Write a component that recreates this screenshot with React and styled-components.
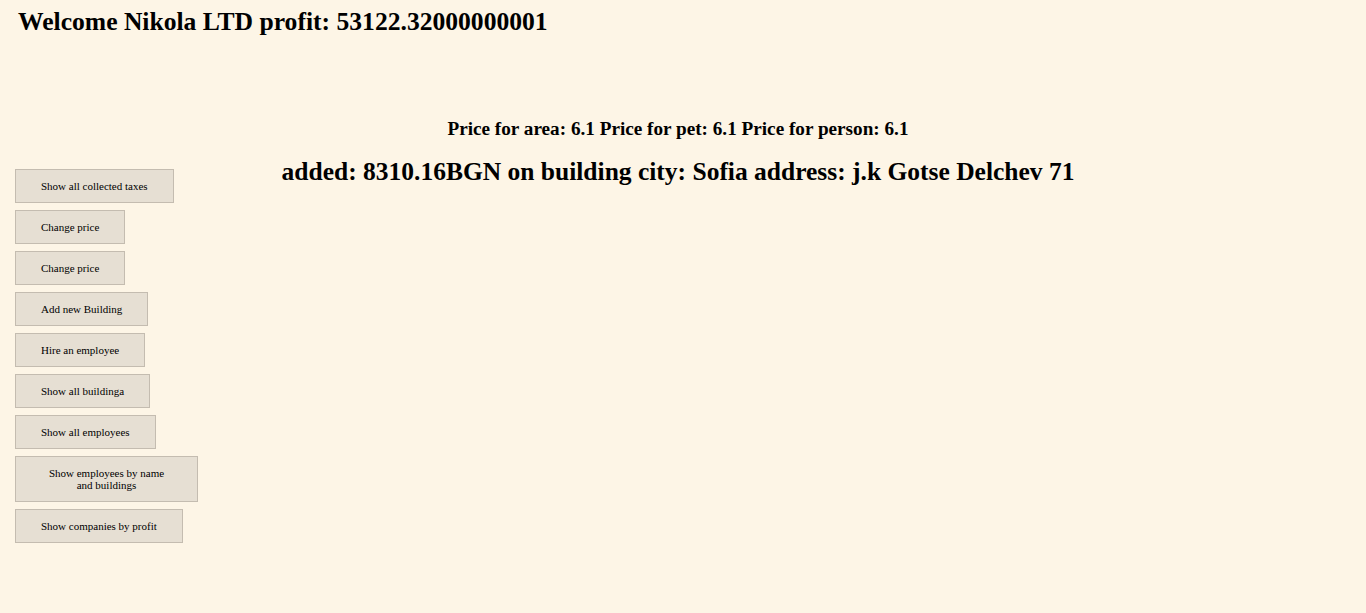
import React from "react";
import styled, { createGlobalStyle } from "styled-components";

const GlobalStyle = createGlobalStyle`
  html, body {
    margin: 0;
    padding: 0;
    background: #fdf5e6;
  }
  body {
    font-family: "Liberation Serif", "Times New Roman", serif;
    color: #000;
  }
`;

const Page = styled.div`
  min-height: 613px;
  padding: 8px 0 0;
  box-sizing: border-box;
`;

const Welcome = styled.h1`
  margin: 0 0 0 18px;
  font-size: 25.6px;
  font-weight: 700;
  line-height: 28px;
`;

const Prices = styled.h3`
  margin: 82px 10px 0 0;
  text-align: center;
  font-size: 19.2px;
  font-weight: 700;
  line-height: 22px;
`;

const Stage = styled.div`
  display: grid;
  margin-top: 11px;
  & > * {
    grid-area: 1 / 1;
  }
`;

const Added = styled.h2`
  margin: 6px 10px 0 0;
  text-align: center;
  font-size: 25.5px;
  font-weight: 700;
  line-height: 30px;
  align-self: start;
`;

const Sidebar = styled.div`
  display: flex;
  flex-direction: column;
  align-items: flex-start;
  gap: 7px;
  padding: 18px 0 0 15px;
  width: 183px;
`;

const MenuButton = styled.button`
  font-family: "Liberation Serif", "Times New Roman", serif;
  font-size: 11px;
  line-height: 12px;
  color: #000;
  background: #e6dfd3;
  border: 1px solid #c4bcb0;
  padding: 10px 25px;
  max-width: 183px;
  text-align: center;
  cursor: pointer;
`;

const items = [
  "Show all collected taxes",
  "Change price",
  "Change price",
  "Add new Building",
  "Hire an employee",
  "Show all buildinga",
  "Show all employees",
  "Show employees by name and buildings",
  "Show companies by profit",
];

export default function App() {
  return (
    <Page>
      <GlobalStyle />
      <Welcome>Welcome Nikola LTD profit: 53122.32000000001</Welcome>
      <Prices>Price for area: 6.1 Price for pet: 6.1 Price for person: 6.1</Prices>
      <Stage>
        <Added>added: 8310.16BGN on building city: Sofia address: j.k Gotse Delchev 71</Added>
        <Sidebar>
          {items.map((label, i) => (
            <MenuButton key={i}>{label}</MenuButton>
          ))}
        </Sidebar>
      </Stage>
    </Page>
  );
}
